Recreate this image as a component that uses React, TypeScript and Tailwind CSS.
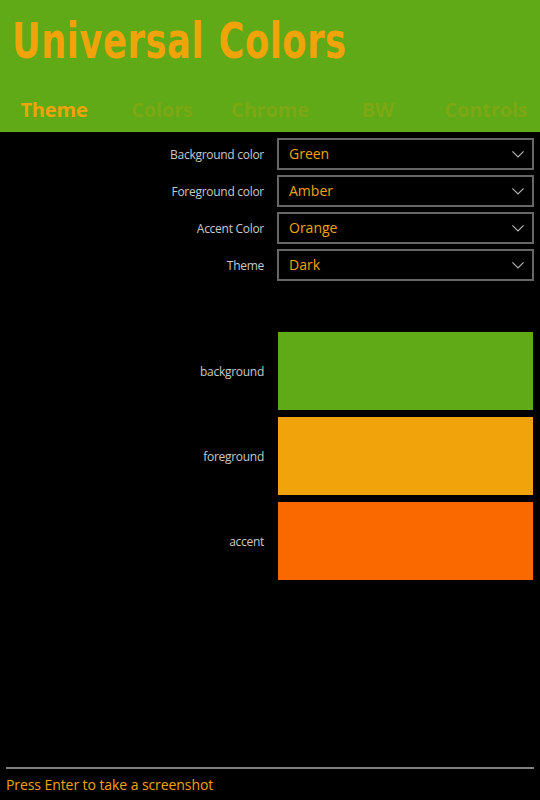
import React from "react";

const selects = [
  { label: "Background color", value: "Green" },
  { label: "Foreground color", value: "Amber" },
  { label: "Accent Color", value: "Orange" },
  { label: "Theme", value: "Dark" },
];

const swatches = [
  { label: "background", color: "bg-[#60a917]" },
  { label: "foreground", color: "bg-[#f0a30a]" },
  { label: "accent", color: "bg-[#fa6800]" },
];

const labelClass =
  "w-[264px] shrink-0 pt-[2px] text-right text-[12px] leading-4 tracking-[-0.28px] text-[#c8c8c8]";

function Chevron() {
  return (
    <svg width="12" height="7" viewBox="0 0 12 7" fill="none" stroke="#b8b8b8" strokeWidth="1.1">
      <path d="M0.4 0.4 L6 5.9 L11.6 0.4" />
    </svg>
  );
}

export default function App() {
  return (
    <div className="flex h-[800px] w-[540px] flex-col overflow-hidden bg-black font-['Open_Sans','Noto_Sans',sans-serif]">
      <header className="flex h-[132px] shrink-0 flex-col bg-[#60a917]">
        <div className="h-[88px] pt-[14px] pl-[12px]">
          <h1 className="w-max origin-left scale-x-[0.8] font-['DejaVu_Sans_Condensed','DejaVu_Sans',sans-serif] text-[49px] leading-[56px] font-bold tracking-[0.7px] [word-spacing:2px] whitespace-nowrap text-[#f0a30a]">
            Universal Colors
          </h1>
        </div>
        <nav className="grid h-[44px] grid-cols-5 items-center text-center text-[20px] leading-[28px] font-bold tracking-[-0.15px] text-[#7ca814]">
          <span className="text-[#f0a30a]">Theme</span>
          <span>Colors</span>
          <span>Chrome</span>
          <span>BW</span>
          <span>Controls</span>
        </nav>
      </header>

      <section className="flex flex-col gap-[5px] pt-[6px]">
        {selects.map((s) => (
          <div key={s.label} className="flex items-center">
            <span className={labelClass}>{s.label}</span>
            <button className="ml-[13px] flex h-8 w-[257px] items-center justify-between border-2 border-[#666] pr-[8px] pl-[10px] text-[14px] leading-5 text-[#f0a30a]">
              <span>{s.value}</span>
              <Chevron />
            </button>
          </div>
        ))}
      </section>

      <section className="mt-[51px] flex flex-col gap-[7px]">
        {swatches.map((s) => (
          <div key={s.label} className="flex items-center">
            <span className={labelClass}>{s.label}</span>
            <div className={`ml-[14px] h-[78px] w-[255px] ${s.color}`} />
          </div>
        ))}
      </section>

      <footer className="mx-[6px] mt-auto h-[33px] border-t-2 border-[#808080] pt-[6px] text-[14px] leading-5 tracking-[-0.08px] text-[#f0a30a]">
        <span>Press Enter to take a screenshot</span>
      </footer>
    </div>
  );
}
